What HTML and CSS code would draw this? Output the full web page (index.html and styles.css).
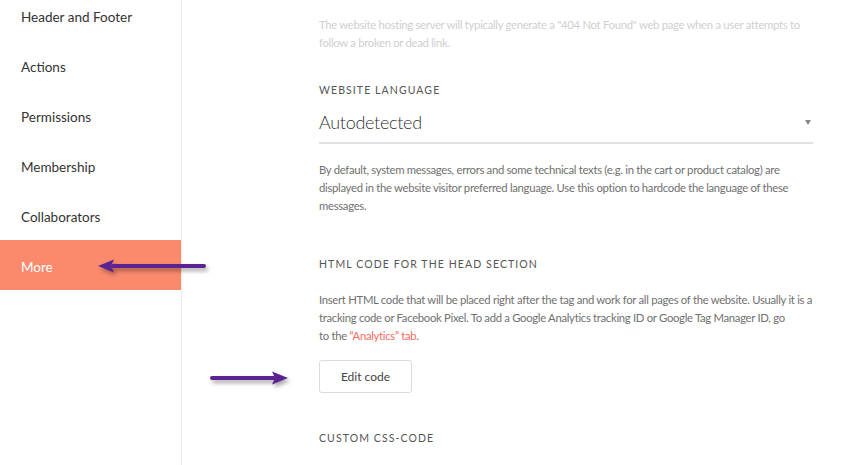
FILE: index.html
```html
<!DOCTYPE html>
<html>
<head>
<meta charset="utf-8">
<link rel="stylesheet" href="styles.css">
</head>
<body>
<div class="page">
  <aside class="sidebar">
    <ul class="nav">
      <li class="nav-item">Header and Footer</li>
      <li class="nav-item">Actions</li>
      <li class="nav-item">Permissions</li>
      <li class="nav-item">Membership</li>
      <li class="nav-item">Collaborators</li>
      <li class="nav-item active">More</li>
    </ul>
  </aside>
  <main class="content">
    <p class="text faded">The website hosting server will typically generate a "404 Not Found" web page when a user attempts to follow a broken or dead link.</p>
    <div class="label label-lang">WEBSITE LANGUAGE</div>
    <div class="select">
      <span class="select-value">Autodetected</span>
      <span class="caret"></span>
    </div>
    <p class="text text-lang">By default, system messages, errors and some technical texts (e.g. in the cart or product catalog) are displayed in the website visitor preferred language. Use this option to hardcode the language of these messages.</p>
    <div class="label label-head">HTML CODE FOR THE HEAD SECTION</div>
    <p class="text text-head">Insert HTML code that will be placed right after the tag and work for all pages of the website. Usually it is a tracking code or Facebook Pixel. To add a Google Analytics tracking ID or Google Tag Manager ID, go to&nbsp;the&nbsp;<span class="link">“Analytics” tab</span>.</p>
    <button class="btn">Edit code</button>
    <div class="label label-css">CUSTOM CSS-CODE</div>
  </main>
</div>

<svg class="arrow arrow-left" width="116" height="20" viewBox="0 0 116 20">
  <path d="M107 8 L16 8" stroke="#5b2391" stroke-width="4" stroke-linecap="round" fill="none"/>
  <path d="M1 8 L17 1.5 L14 8 L17 14.5 Z" fill="#5b2391"/>
</svg>
<svg class="arrow arrow-right" width="86" height="20" viewBox="0 0 86 20">
  <path d="M2 8 L64 8" stroke="#5b2391" stroke-width="4" stroke-linecap="round" fill="none"/>
  <path d="M78 8 L62 1.5 L65 8 L62 14.5 Z" fill="#5b2391"/>
</svg>
</body>
</html>
```

FILE: styles.css
```css
* { box-sizing: border-box; }
html, body { margin: 0; padding: 0; background: #fff; }
body {
  font-family: Lato, "Open Sans", sans-serif;
  color: #333;
  width: 852px;
  height: 465px;
  overflow: hidden;
  position: relative;
}
.page {
  display: flex;
  height: 465px;
}
.sidebar {
  width: 182px;
  flex: none;
  border-right: 1px solid #ececec;
}
.nav {
  list-style: none;
  margin: -10px 0 0;
  padding: 0;
}
.nav-item {
  height: 50px;
  display: flex;
  align-items: center;
  padding: 4px 0 0 21px;
  font-size: 13.5px;
  color: #333;
}
.nav-item.active {
  background: #fb8a6d;
  color: #fff;
}
.content {
  padding-left: 137px;
  width: 631px;
}
.text {
  margin: 0;
  font-size: 11.3px;
  letter-spacing: -0.3px;
  line-height: 18px;
  color: #707070;
}
.faded { margin-top: 16px; color: #cfcfcf; }
.label {
  font-size: 10.5px;
  line-height: 14px;
  letter-spacing: 1.1px;
  color: #555;
}
.label-lang { margin-top: 31px; }
.select {
  margin-top: 3px;
  padding: 10px 0 8px;
  border-bottom: 2px solid #e2e2e2;
  display: flex;
  justify-content: space-between;
  align-items: center;
}
.select-value {
  font-size: 18px;
  letter-spacing: -0.3px;
  line-height: 24px;
  color: #333;
  font-weight: 300;
}
.caret {
  width: 0;
  height: 0;
  border-left: 3.5px solid transparent;
  border-right: 3.5px solid transparent;
  border-top: 5px solid #888;
  margin-right: 2px;
}
.text-lang { margin-top: 17px; }
.label-head { margin-top: 42px; }
.text-head { margin-top: 20px; }
.link { color: #f46b5f; }
.btn {
  display: block;
  margin-top: 15px;
  width: 93px;
  height: 33px;
  background: #fff;
  border: 1px solid #dcdcdc;
  border-radius: 3px;
  font-family: inherit;
  font-size: 12px;
  color: #444;
  padding: 0;
}
.label-css { margin-top: 38px; }
.arrow {
  position: absolute;
  filter: drop-shadow(2px 3px 2px rgba(0,0,0,0.35));
  overflow: visible;
}
.arrow-left { left: 97px; top: 258px; }
.arrow-right { left: 210px; top: 370px; }
```
